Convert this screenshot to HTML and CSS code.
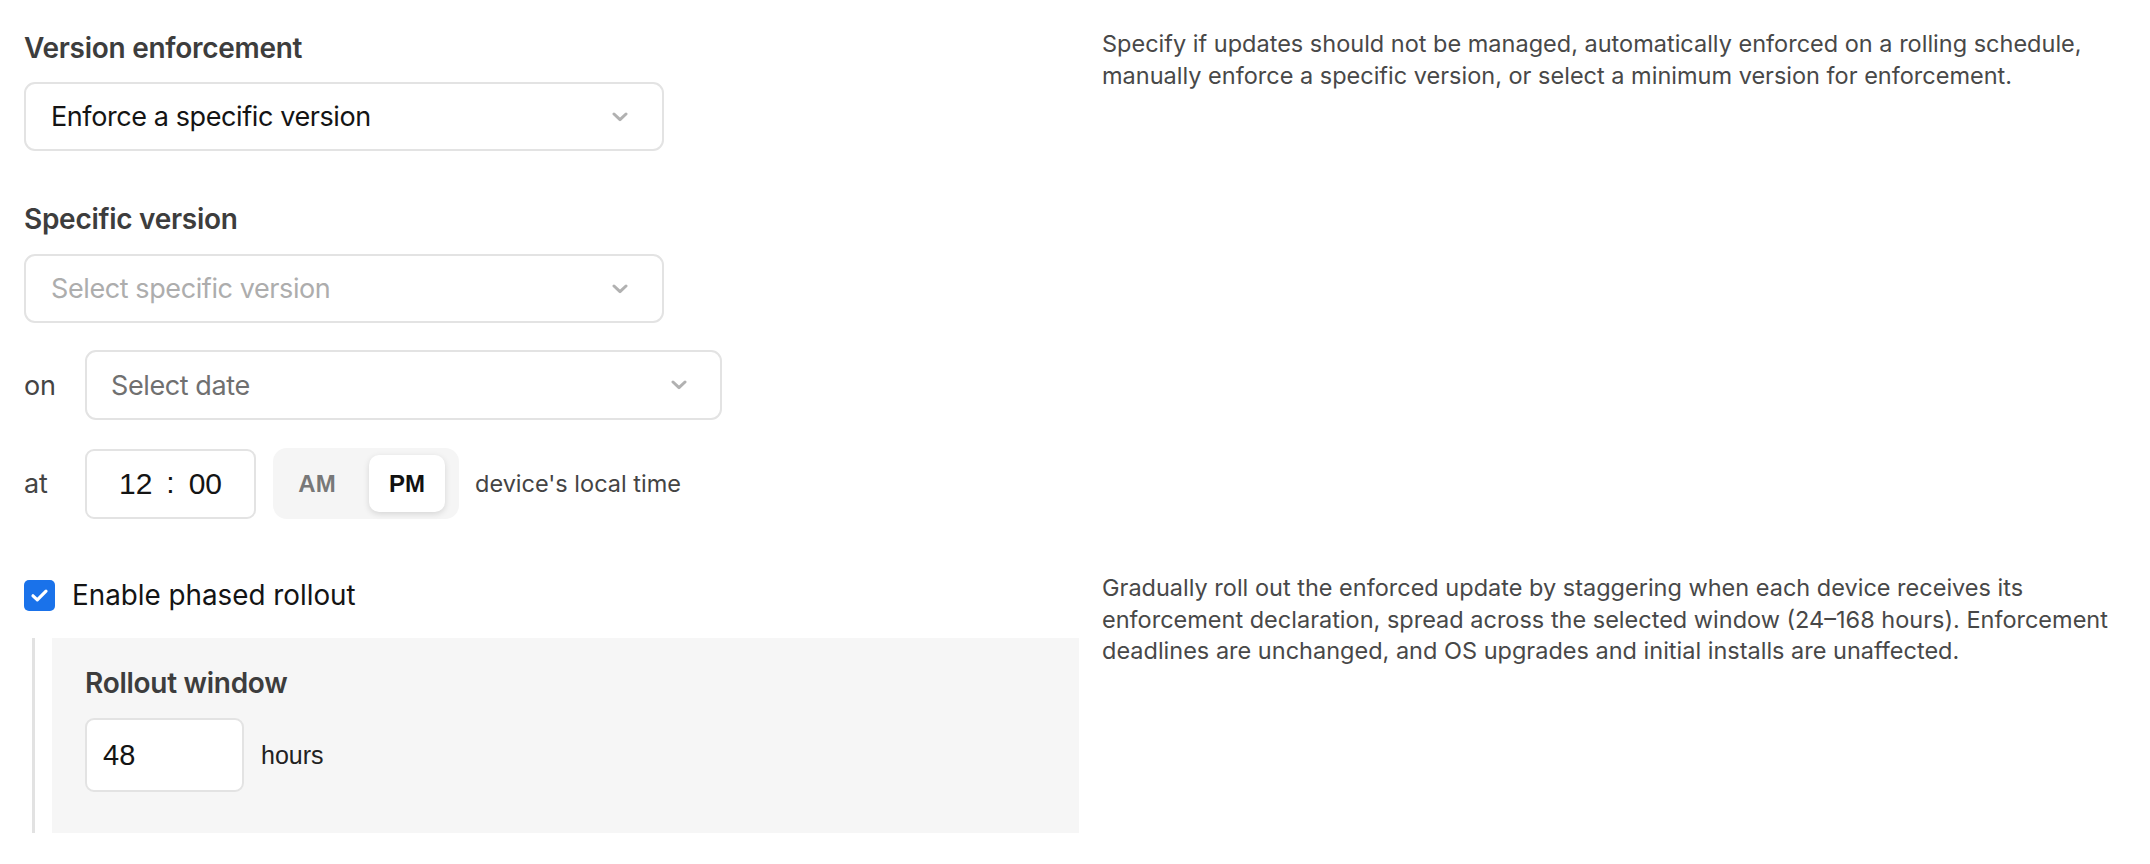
FILE: index.html
```html
<!DOCTYPE html>
<html lang="en">
<head>
<meta charset="utf-8">
<title>Version enforcement</title>
<link rel="stylesheet" href="styles.css">
</head>
<body>
<div class="page">
  <section class="section section-top">
    <div class="col-left">
      <h3 class="field-title">Version enforcement</h3>
      <div class="select select-wide">
        <span class="select-value">Enforce a specific version</span>
        <svg class="chevron" width="16" height="10" viewBox="0 0 16 10"><path d="M2 2 L8 7.6 L14 2" fill="none" stroke="#b1b1b1" stroke-width="3" stroke-linecap="round" stroke-linejoin="round"/></svg>
      </div>
      <h3 class="field-title title-gap">Specific version</h3>
      <div class="select select-wide select-gap">
        <span class="select-placeholder">Select specific version</span>
        <svg class="chevron" width="16" height="10" viewBox="0 0 16 10"><path d="M2 2 L8 7.6 L14 2" fill="none" stroke="#b1b1b1" stroke-width="3" stroke-linecap="round" stroke-linejoin="round"/></svg>
      </div>
      <div class="inline-row row-on">
        <span class="inline-label">on</span>
        <div class="select select-date">
          <span class="select-date-text">Select date</span>
          <svg class="chevron" width="16" height="10" viewBox="0 0 16 10"><path d="M2 2 L8 7.6 L14 2" fill="none" stroke="#b1b1b1" stroke-width="3" stroke-linecap="round" stroke-linejoin="round"/></svg>
        </div>
      </div>
      <div class="inline-row row-at">
        <span class="inline-label">at</span>
        <div class="time-input">
          <span>12</span><span class="time-colon">:</span><span>00</span>
        </div>
        <div class="ampm">
          <span class="ampm-btn">AM</span>
          <span class="ampm-btn active">PM</span>
        </div>
        <span class="local-time">device's local time</span>
      </div>
    </div>
    <p class="description desc-top">Specify if updates should not be managed, automatically enforced on a rolling schedule, manually enforce a specific version, or select a minimum version for enforcement.</p>
  </section>

  <section class="section section-rollout">
    <div class="col-left">
      <label class="check-row">
        <span class="checkbox">
          <svg width="19" height="15" viewBox="0 0 19 15"><path d="M3 7.8 L7.3 11.8 L16 3.2" fill="none" stroke="#ffffff" stroke-width="3.2" stroke-linecap="round" stroke-linejoin="round"/></svg>
        </span>
        <span class="check-label">Enable phased rollout</span>
      </label>
      <div class="panel">
        <div class="panel-inner">
          <h3 class="field-title">Rollout window</h3>
          <div class="hours-row">
            <div class="number-input">48</div>
            <span class="hours-label">hours</span>
          </div>
        </div>
      </div>
    </div>
    <p class="description desc-rollout">Gradually roll out the enforced update by staggering when each device receives its enforcement declaration, spread across the selected window (24–168 hours). Enforcement deadlines are unchanged, and OS upgrades and initial installs are unaffected.</p>
  </section>
</div>
</body>
</html>
```

FILE: styles.css
```css
* { box-sizing: border-box; }

html, body {
  margin: 0;
  padding: 0;
  background: #ffffff;
}

body {
  font-family: Inter, "Noto Sans", sans-serif;
  color: #1a1a1a;
}

.page {
  padding: 30px 10px 0 24px;
}

.section {
  display: grid;
  grid-template-columns: 1055px 1fr;
  column-gap: 23px;
  align-items: start;
}

.section-rollout {
  margin-top: 58px;
}

.col-left {
  display: flex;
  flex-direction: column;
  align-items: flex-start;
}

.field-title {
  margin: 0;
  font-size: 28px;
  line-height: 36px;
  font-weight: 600;
  color: #3d3d3d;
  letter-spacing: -0.01em;
}

.title-gap {
  margin-top: 50px;
}

.select {
  display: flex;
  align-items: center;
  justify-content: space-between;
  height: 69px;
  border: 2px solid #e3e3e3;
  border-radius: 11px;
  background: #ffffff;
  padding: 0 34px 0 25px;
  margin-top: 16px;
  font-size: 27px;
  letter-spacing: -0.015em;
}

.select-wide {
  width: 640px;
}

.select-gap {
  margin-top: 17px;
}

.select-value {
  color: #141414;
}

.select-placeholder {
  color: #adadad;
}

.select-date-text {
  color: #707070;
}

.chevron {
  display: block;
  flex: none;
}

.inline-row {
  display: flex;
  align-items: center;
}

.row-on {
  margin-top: 27px;
}

.row-at {
  margin-top: 28px;
}

.inline-label {
  width: 61px;
  font-size: 27px;
  color: #444444;
  letter-spacing: -0.01em;
}

.select-date {
  width: 637px;
  height: 70px;
  margin-top: 0;
  padding: 0 33px 0 24px;
}

.time-input {
  width: 171px;
  height: 70px;
  border: 2px solid #e3e3e3;
  border-radius: 9px;
  display: flex;
  align-items: center;
  justify-content: center;
  gap: 14px;
  font-family: "Liberation Sans", Arial, sans-serif;
  font-size: 30px;
  color: #141414;
}

.time-colon {
  position: relative;
  top: -1px;
}

.ampm {
  display: flex;
  gap: 14px;
  margin-left: 17px;
  padding: 7px 14px 7px 6px;
  height: 71px;
  background: #f5f5f5;
  border-radius: 14px;
}

.ampm-btn {
  width: 76px;
  display: flex;
  align-items: center;
  justify-content: center;
  font-family: "Liberation Sans", Arial, sans-serif;
  font-weight: 700;
  font-size: 24px;
  color: #787878;
  border-radius: 10px;
}

.ampm-btn.active {
  background: #ffffff;
  color: #111111;
  box-shadow: 0 2px 6px rgba(0, 0, 0, 0.13);
}

.local-time {
  margin-left: 16px;
  font-size: 23.5px;
  color: #444444;
}

.check-row {
  display: flex;
  align-items: center;
  height: 36px;
  gap: 17px;
}

.checkbox {
  width: 31px;
  height: 31px;
  border-radius: 5px;
  background: #1a72ea;
  display: flex;
  align-items: center;
  justify-content: center;
}

.checkbox svg {
  display: block;
}

.check-label {
  font-size: 27.8px;
  color: #141414;
}

.panel {
  align-self: stretch;
  margin-top: 25px;
  margin-left: 8px;
  border-left: 3px solid #e2e2e2;
  padding-left: 17px;
}

.panel-inner {
  background: #f6f6f6;
  padding: 27px 33px 41px 33px;
}

.hours-row {
  display: flex;
  align-items: center;
  margin-top: 17px;
}

.number-input {
  width: 159px;
  height: 74px;
  background: #ffffff;
  border: 2px solid #e3e3e3;
  border-radius: 9px;
  display: flex;
  align-items: center;
  padding-left: 16px;
  font-family: "Liberation Sans", Arial, sans-serif;
  font-size: 29px;
  color: #141414;
}

.hours-label {
  margin-left: 17px;
  font-family: "Liberation Sans", Arial, sans-serif;
  font-size: 25px;
  color: #222222;
}

.description {
  margin: 0;
  font-size: 23.5px;
  line-height: 31.5px;
  color: #484848;
}

.desc-top {
  margin-top: -2px;
}

.desc-rollout {
  margin-top: -5px;
}
```
